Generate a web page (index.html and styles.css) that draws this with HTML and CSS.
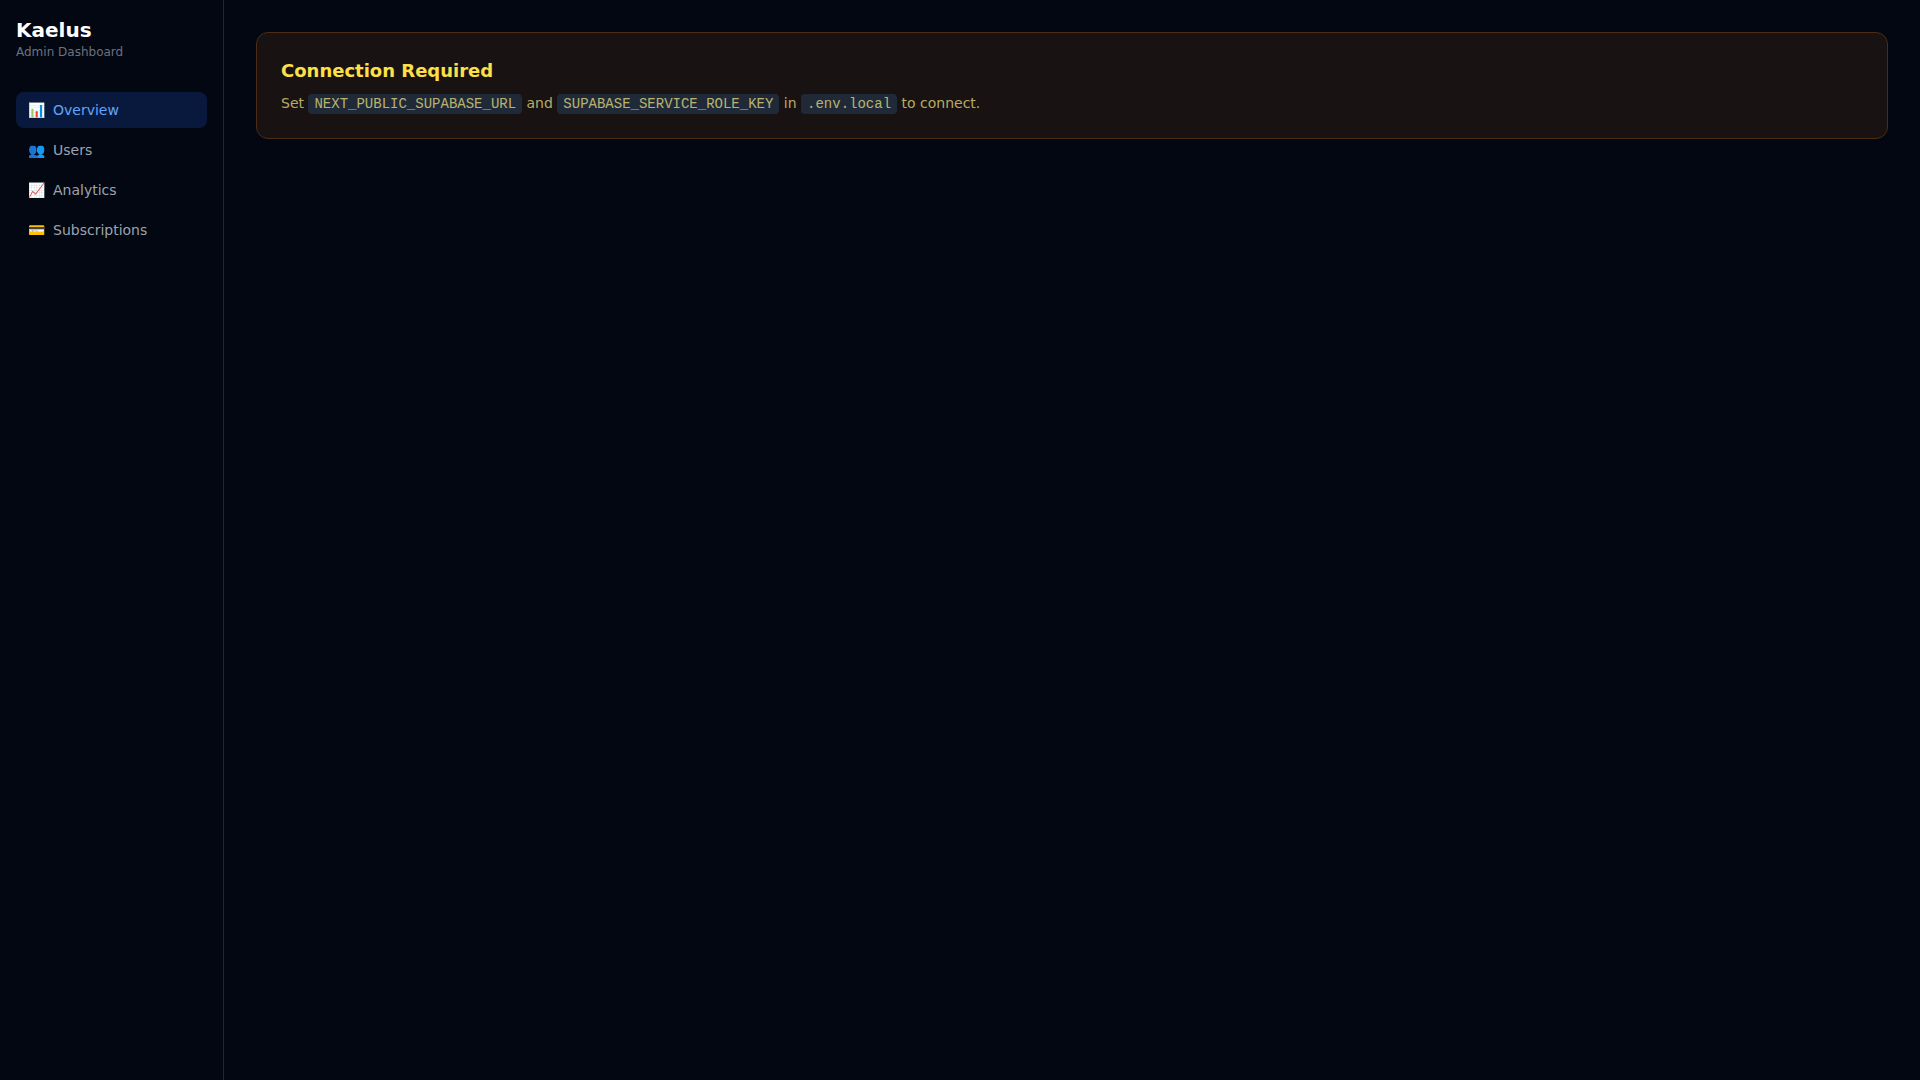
FILE: index.html
```html
<!DOCTYPE html>
<html lang="en">
<head>
    <meta charset="UTF-8">
    <meta name="viewport" content="width=device-width, initial-scale=1.0">
    <title>Kaelus Admin Dashboard</title>
    <link rel="stylesheet" href="styles.css">
</head>
<body>
    <!-- Sidebar -->
    <aside class="sidebar">
        <div class="brand">
            <h1>Kaelus</h1>
            <p>Admin Dashboard</p>
        </div>
        <nav class="nav">
            <a href="#" class="nav-link active"><span>📊</span>Overview</a>
            <a href="#" class="nav-link"><span>👥</span>Users</a>
            <a href="#" class="nav-link"><span>📈</span>Analytics</a>
            <a href="#" class="nav-link"><span>💳</span>Subscriptions</a>
        </nav>
    </aside>

    <!-- Main content -->
    <main class="content">
        <section class="notice">
            <h2>Connection Required</h2>
            <p>Set <code>NEXT_PUBLIC_SUPABASE_URL</code> and <code>SUPABASE_SERVICE_ROLE_KEY</code> in <code>.env.local</code> to connect.</p>
        </section>
    </main>
</body>
</html>
```

FILE: styles.css
```css
* {
    box-sizing: border-box;
    margin: 0;
    padding: 0;
}

body {
    display: flex;
    min-height: 100vh;
    background-color: #030712;
    color: #fff;
    font-family: "DejaVu Sans", sans-serif;
    font-size: 16px;
    line-height: 24px;
}

/* Sidebar */
.sidebar {
    flex: none;
    width: 224px;
    padding: 16px;
    border-right: 1px solid #23262f;
}

.brand {
    margin-bottom: 32px;
}

.brand h1 {
    font-size: 20px;
    line-height: 28px;
}

.brand p {
    color: #6b7280;
    font-size: 12px;
    line-height: 16px;
}

.nav {
    display: flex;
    flex-direction: column;
    gap: 4px;
}

.nav-link {
    display: flex;
    align-items: center;
    gap: 8px;
    padding: 8px 12px;
    border-radius: 8px;
    color: #9ca3af;
    font-size: 14px;
    line-height: 20px;
    text-decoration: none;
}

.nav-link.active {
    background-color: rgba(37, 99, 235, 0.2);
    color: #60a5fa;
}

/* Main content */
.content {
    flex: 1;
    padding: 32px;
}

.notice {
    padding: 24px;
    border: 1px solid #4c2c12;
    border-radius: 12px;
    background-color: rgba(113, 63, 18, 0.2);
}

.notice h2 {
    margin-bottom: 8px;
    color: #fde047;
    font-size: 18px;
    line-height: 28px;
}

.notice p {
    color: rgba(254, 240, 138, 0.7);
    font-size: 14px;
    line-height: 20px;
}

.notice code {
    padding: 2px 6px;
    border-radius: 4px;
    background-color: #1f2937;
    font-family: "Liberation Mono", monospace;
    font-size: 14px;
}
```
